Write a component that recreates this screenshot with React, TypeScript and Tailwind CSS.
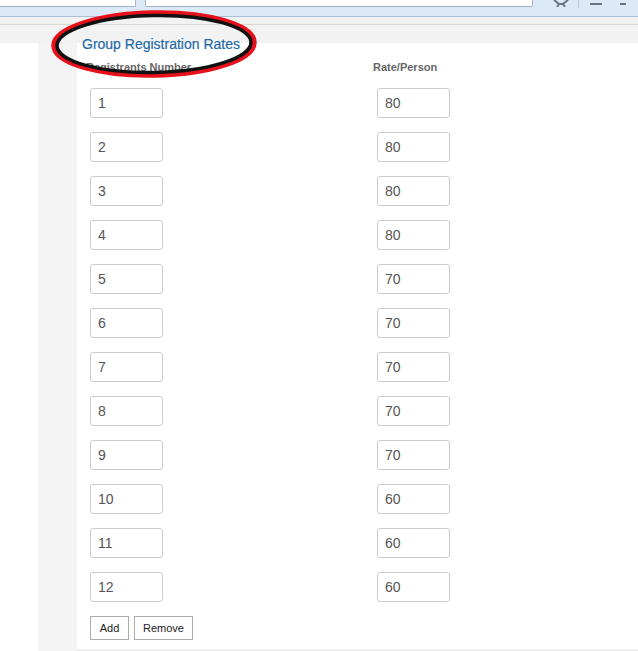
const RATES = [80, 80, 80, 80, 70, 70, 70, 70, 70, 60, 60, 60];

function Field({ value }: { value: string }) {
  return (
    <input
      readOnly
      value={value}
      className="ml-[4px] h-[30px] w-[73px] rounded-[3px] border border-[#cccccc] bg-white px-[7px] text-[14px] text-[#555555] outline-none"
    />
  );
}

export default function App() {
  return (
    <div className="relative h-[651px] w-[638px] overflow-hidden bg-white font-['Liberation_Sans',Arial,sans-serif]">
      {/* browser toolbar, cut at the top */}
      <div className="flex h-[17px] items-start border-b border-[#a9c0db] bg-[#dce9f7]">
        <div className="h-[7px] w-[136px] rounded-br-[2px] border-r border-b border-[#a3b4c8] bg-white" />
        <div className="ml-[9px] h-[7px] w-[388px] rounded-b-[2px] border-x border-b border-[#a3b4c8] bg-white" />
        <svg className="ml-[20px]" width="16" height="7" viewBox="0 0 16 7">
          <path d="M1 0 L6 4 L4 7 M15 0 L10 4 L12 7 M6 4 L10 4" stroke="#6b7480" strokeWidth="2" fill="none" />
        </svg>
        <div className="ml-[9px] h-[8px] w-px bg-[#b5c5d8]" />
        <div className="ml-[11px] mt-[3px] h-[2px] w-[12px] bg-[#6b7480]" />
        <div className="ml-[18px] mt-[3px] h-[2px] w-[6px] bg-[#6b7480]" />
      </div>

      {/* grey strip under the toolbar */}
      <div className="h-[7px] bg-[#f2f2f2]" />
      <div className="h-[19px] border-t border-[#d9d9d9] bg-[#f2f2f2]" />

      <div className="flex h-[608px]">
        <div className="w-[38px] bg-white" />
        <div className="w-[39px] bg-[#f3f3f3]" />
        <div className="flex-1 border-b-2 border-[#f0f0f0] bg-white">
          <h2 className="-mt-[7px] pl-[5px] text-[14px] leading-[16px] font-medium text-[#1f68a8] [-webkit-text-stroke:0.2px_#1f68a8]">
            Group Registration Rates
          </h2>

          <div className="mt-[9px] grid grid-cols-[287px_auto] pl-[9px] text-[11px] leading-[13px] font-bold text-[#666666]">
            <span>Registrants Number</span>
            <span>Rate/Person</span>
          </div>

          <div className="mt-[14px] flex flex-col gap-[14px] pl-[9px]">
            {RATES.map((r, i) => (
              <div key={i} className="grid grid-cols-[287px_auto]">
                <div><Field value={String(i + 1)} /></div>
                <div><Field value={String(r)} /></div>
              </div>
            ))}
          </div>

          <div className="mt-[14px] flex gap-[5px] pl-[13px]">
            <button className="h-[24px] w-[39px] border border-[#adadad] bg-white text-[11px] text-[#222222]">Add</button>
            <button className="h-[24px] w-[59px] border border-[#adadad] bg-white text-[11px] text-[#222222]">Remove</button>
          </div>
        </div>
      </div>

      {/* hand-drawn annotation round the heading */}
      <svg className="absolute left-[50px] top-[8px]" width="210" height="72" viewBox="0 0 210 72">
        <ellipse cx="104" cy="36" rx="100" ry="31" fill="none" stroke="#e8101a" strokeWidth="5.5" transform="rotate(-1 104 36)" />
        <ellipse cx="104" cy="36" rx="97" ry="28.5" fill="none" stroke="#111111" strokeWidth="3.5" transform="rotate(-1 104 36)" />
      </svg>
    </div>
  );
}
